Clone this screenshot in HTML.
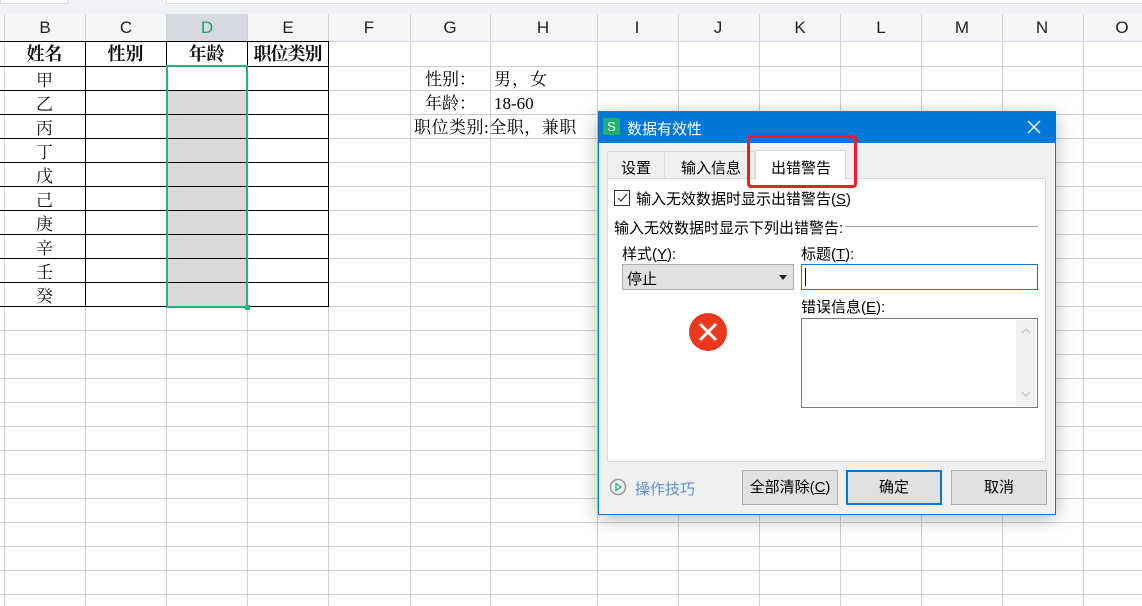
<!DOCTYPE html>
<html><head><meta charset="utf-8">
<style>
*{margin:0;padding:0;box-sizing:border-box}
body{width:1142px;height:606px;overflow:hidden;background:#fff;position:relative;font-family:"Liberation Sans","Noto Sans CJK SC",sans-serif}
.a{position:absolute}
.vl{position:absolute;top:14px;bottom:0;width:1px;background:#cbd0dc}
.hl{position:absolute;left:0;right:0;height:1px;background:#cbd0dc}
.ch{position:absolute;top:14px;height:27px;line-height:28px;font-size:17px;color:#222;text-align:center;width:40px;margin-left:-20px}
.serif{font-family:"Liberation Serif","Noto Serif CJK SC",serif}
.cell{position:absolute;width:81px;text-align:center;font-size:17px;color:#111;height:24px;line-height:24px}
.bx{position:absolute;background:#000}
.dt{font-size:15px;color:#000;position:absolute;white-space:nowrap}
.btn{position:absolute;height:35px;background:#e1e1e1;border:1px solid #adadad;font-size:15px;text-align:center;line-height:33px;color:#000}
</style></head><body>
<div class="a" style="left:0;top:0;width:1142px;height:14px;background:#f0f1f4"></div>
<div class="a" style="left:0;top:0;width:68px;height:4px;border:1px solid #d8dbe2;border-top:none;background:#fff"></div>
<div class="a" style="left:166px;top:0;width:976px;height:4px;border-bottom:1px solid #d8dbe2;border-left:1px solid #d8dbe2;background:#fff"></div>
<div class="a" style="left:0;top:14px;width:1142px;height:27px;background:#f5f6f8"></div>
<div class="a" style="left:166px;top:14px;width:81px;height:27px;background:#d6d9df"></div>
<div class="vl" style="left:4px"></div><div class="vl" style="left:85px"></div><div class="vl" style="left:166px"></div><div class="vl" style="left:247px"></div><div class="vl" style="left:328px"></div><div class="vl" style="left:410px"></div><div class="vl" style="left:490px"></div><div class="vl" style="left:597px"></div><div class="vl" style="left:678px"></div><div class="vl" style="left:759px"></div><div class="vl" style="left:840px"></div><div class="vl" style="left:921px"></div><div class="vl" style="left:1002px"></div><div class="vl" style="left:1083px"></div>
<div class="hl" style="top:41px"></div><div class="hl" style="top:66px"></div><div class="hl" style="top:90px"></div><div class="hl" style="top:114px"></div><div class="hl" style="top:138px"></div><div class="hl" style="top:162px"></div><div class="hl" style="top:186px"></div><div class="hl" style="top:210px"></div><div class="hl" style="top:234px"></div><div class="hl" style="top:258px"></div><div class="hl" style="top:282px"></div><div class="hl" style="top:306px"></div><div class="hl" style="top:330px"></div><div class="hl" style="top:354px"></div><div class="hl" style="top:378px"></div><div class="hl" style="top:402px"></div><div class="hl" style="top:426px"></div><div class="hl" style="top:450px"></div><div class="hl" style="top:474px"></div><div class="hl" style="top:498px"></div><div class="hl" style="top:522px"></div><div class="hl" style="top:546px"></div><div class="hl" style="top:570px"></div><div class="hl" style="top:594px"></div>
<div class="ch" style="left:45px">B</div><div class="ch" style="left:126px">C</div><div class="ch" style="left:207px;color:#21a366">D</div><div class="ch" style="left:288px">E</div><div class="ch" style="left:369px">F</div><div class="ch" style="left:450px">G</div><div class="ch" style="left:543px">H</div><div class="ch" style="left:637px">I</div><div class="ch" style="left:718px">J</div><div class="ch" style="left:800px">K</div><div class="ch" style="left:881px">L</div><div class="ch" style="left:962px">M</div><div class="ch" style="left:1042px">N</div><div class="ch" style="left:1122px">O</div>
<div class="a" style="left:168px;top:91px;width:78px;height:215px;background:#d9d9d9"></div>
<div class="bx" style="left:0;top:41px;width:329px;height:1px"></div>
<div class="bx" style="left:0;top:66px;width:329px;height:1px"></div>
<div class="bx" style="left:0;top:90px;width:329px;height:1px"></div>
<div class="bx" style="left:0;top:114px;width:329px;height:1px"></div>
<div class="bx" style="left:0;top:138px;width:329px;height:1px"></div>
<div class="bx" style="left:0;top:162px;width:329px;height:1px"></div>
<div class="bx" style="left:0;top:186px;width:329px;height:1px"></div>
<div class="bx" style="left:0;top:210px;width:329px;height:1px"></div>
<div class="bx" style="left:0;top:234px;width:329px;height:1px"></div>
<div class="bx" style="left:0;top:258px;width:329px;height:1px"></div>
<div class="bx" style="left:0;top:282px;width:329px;height:1px"></div>
<div class="bx" style="left:0;top:306px;width:329px;height:1px"></div>
<div class="bx" style="left:85px;top:41px;width:1px;height:266px"></div>
<div class="bx" style="left:166px;top:41px;width:1px;height:266px"></div>
<div class="bx" style="left:247px;top:41px;width:1px;height:266px"></div>
<div class="bx" style="left:328px;top:41px;width:1px;height:266px"></div>
<div class="a" style="left:166px;top:65px;width:82px;height:243px;border:2px solid #21b57a"></div>
<div class="a" style="left:245px;top:305px;width:5px;height:5px;background:#21b57a"></div>
<div class="cell serif" style="left:4px;top:42px;font-weight:bold;font-size:18px">姓名</div>
<div class="cell serif" style="left:85px;top:42px;font-weight:bold;font-size:18px">性别</div>
<div class="cell serif" style="left:166px;top:42px;font-weight:bold;font-size:18px">年龄</div>
<div class="cell serif" style="left:247px;top:42px;font-weight:bold;font-size:18px;letter-spacing:-1px">职位类别</div>
<div class="cell serif" style="left:4px;top:69px">甲</div>
<div class="cell serif" style="left:4px;top:93px">乙</div>
<div class="cell serif" style="left:4px;top:117px">丙</div>
<div class="cell serif" style="left:4px;top:141px">丁</div>
<div class="cell serif" style="left:4px;top:165px">戊</div>
<div class="cell serif" style="left:4px;top:189px">己</div>
<div class="cell serif" style="left:4px;top:213px">庚</div>
<div class="cell serif" style="left:4px;top:237px">辛</div>
<div class="cell serif" style="left:4px;top:261px">壬</div>
<div class="cell serif" style="left:4px;top:285px">癸</div>
<div class="a serif" style="left:425px;top:68px;font-size:17px;line-height:24px">性别：</div>
<div class="a serif" style="left:494px;top:68px;font-size:17px;line-height:24px;letter-spacing:1px">男，女</div>
<div class="a serif" style="left:425px;top:92px;font-size:17px;line-height:24px">年龄：</div>
<div class="a serif" style="left:494px;top:92px;font-size:17px;line-height:24px">18-60</div>
<div class="a serif" style="left:414px;top:116px;font-size:17px;line-height:24px;white-space:nowrap;letter-spacing:0.5px">职位类别:全职，兼职</div>
<!-- dialog -->
<div class="a" style="left:598px;top:111px;width:458px;height:404px;background:#f0f0f0;border:1px solid #0078d7;box-shadow:0 4px 18px rgba(0,0,0,.28)"></div>
<div class="a" style="left:598px;top:111px;width:458px;height:32px;background:#0078d7"></div>
<div class="a" style="left:603px;top:118px;width:17px;height:17px;background:#1fb06b;border-radius:2px;color:#fff;font-size:13px;line-height:17px;text-align:center">S</div>
<div class="dt" style="left:627px;top:118px;color:#fff;font-size:15px">数据有效性</div>
<svg class="a" style="left:1026px;top:119px" width="16" height="16"><path d="M2 2L14 14M14 2L2 14" stroke="#fff" stroke-width="1.4"/></svg>
<div class="a" style="left:607px;top:151px;width:58px;height:28px;border:1px solid #d9d9d9;border-bottom:none;background:#f0f0f0"></div>
<div class="dt" style="left:621px;top:157px">设置</div>
<div class="a" style="left:665px;top:151px;width:90px;height:28px;border:1px solid #d9d9d9;border-bottom:none;border-left:none;background:#f0f0f0"></div>
<div class="dt" style="left:681px;top:157px">输入信息</div>
<div class="a" style="left:607px;top:178px;width:439px;height:284px;background:#fff;border:1px solid #d9d9d9"></div>
<div class="a" style="left:755px;top:150px;width:91px;height:30px;background:#fff;border:1px solid #d9d9d9;border-bottom:none"></div>
<div class="dt" style="left:771px;top:157px">出错警告</div>
<div class="a" style="left:747px;top:135px;width:110px;height:53px;border:3px solid #e8231e;border-radius:4px"></div>
<div class="a" style="left:614px;top:190px;width:16px;height:16px;border:1px solid #333;background:#fff"></div>
<svg class="a" style="left:615px;top:191px" width="14" height="14"><path d="M3 7L6 10L12 3" stroke="#333" stroke-width="1.2" fill="none"/></svg>
<div class="dt" style="left:636px;top:188px">输入无效数据时显示出错警告(<u>S</u>)</div>
<div class="dt" style="left:614px;top:217px">输入无效数据时显示下列出错警告:</div>
<div class="a" style="left:845px;top:226px;width:193px;height:1px;background:#a0a0a0"></div>
<div class="dt" style="left:622px;top:243px">样式(<u>Y</u>):</div>
<div class="a" style="left:622px;top:264px;width:172px;height:26px;background:#e1e1e1;border:1px solid #adadad"></div>
<div class="dt" style="left:627px;top:268px">停止</div>
<svg class="a" style="left:779px;top:275px" width="8" height="5"><path d="M0 0H8L4 5Z" fill="#222"/></svg>
<div class="dt" style="left:801px;top:243px">标题(<u>T</u>):</div>
<div class="a" style="left:801px;top:264px;width:237px;height:26px;background:#fff;border:1px solid #0078d7"></div>
<div class="a" style="left:805px;top:268px;width:1px;height:18px;background:#000"></div>
<div class="dt" style="left:801px;top:296px">错误信息(<u>E</u>):</div>
<div class="a" style="left:801px;top:318px;width:237px;height:90px;background:#fff;border:1px solid #7a7a7a"></div>
<div class="a" style="left:1016px;top:320px;width:20px;height:86px;background:#f0f0f0"></div>
<svg class="a" style="left:1020px;top:326px" width="12" height="80"><path d="M2 7L6 3L10 7" stroke="#c2c2c2" fill="none" stroke-width="1.2"/><path d="M2 66L6 70L10 66" stroke="#c2c2c2" fill="none" stroke-width="1.2"/></svg>
<svg class="a" style="left:688px;top:312px" width="40" height="40"><circle cx="20" cy="20" r="19" fill="#e8391f"/><path d="M12 12L28 28M28 12L12 28" stroke="#fff" stroke-width="3"/></svg>
<svg class="a" style="left:609px;top:478px" width="18" height="18"><circle cx="9" cy="9" r="7.5" stroke="#9a9a9a" stroke-width="1.5" fill="none"/><path d="M7 5.5V12.5L12 9Z" fill="none" stroke="#2bb673" stroke-width="1.3"/></svg>
<div class="dt" style="left:635px;top:478px;color:#5b8fd6">操作技巧</div>
<div class="btn" style="left:742px;top:470px;width:96px">全部清除(<u>C</u>)</div>
<div class="btn" style="left:846px;top:470px;width:96px;border:2px solid #0078d7;line-height:31px">确定</div>
<div class="btn" style="left:951px;top:470px;width:96px">取消</div>
</body></html>
